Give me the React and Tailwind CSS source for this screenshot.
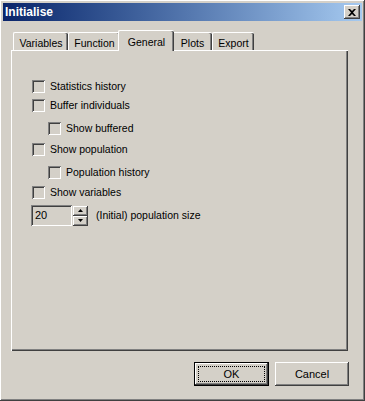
import React from 'react';

const raised =
  'bg-[#d4d0c8] shadow-[inset_-1px_-1px_#404040,inset_1px_1px_#ffffff,inset_-2px_-2px_#808080,inset_2px_2px_#d4d0c8]';
const sunken =
  'shadow-[inset_1px_1px_#808080,inset_-1px_-1px_#ffffff,inset_2px_2px_#404040,inset_-2px_-2px_#d4d0c8]';

function Checkbox({ label, indent, className = '' }) {
  return (
    <div className={`flex items-center h-[13px] ${indent ? 'pl-[36px]' : 'pl-[20px]'} ${className}`}>
      <div className={`w-[13px] h-[13px] bg-[#d4d0c8] ${sunken}`} />
      <span className="ml-[5px] leading-none">{label}</span>
    </div>
  );
}

function Tab({ label, width, selected }) {
  if (selected) {
    return (
      <div
        className="relative z-10 -mx-[2px] h-[21px] -mb-[1px] flex items-start justify-center pt-[4px] bg-[#d4d0c8] rounded-t-[2px] border-t border-l border-white shadow-[inset_-1px_0_#404040,inset_-2px_0_#808080]"
        style={{ width: width + 4 }}
      >
        {label}
      </div>
    );
  }
  return (
    <div
      className="h-[18px] mt-[2px] flex items-start justify-center pt-[3px] rounded-t-[2px] border-t border-l border-white shadow-[inset_-1px_0_#404040,inset_-2px_0_#808080]"
      style={{ width }}
    >
      {label}
    </div>
  );
}

export default function App() {
  return (
    <div
      className={`w-[365px] h-[401px] p-[2px] flex flex-col text-black text-[10.5px] ${raised}`}
      style={{ fontFamily: '"Liberation Sans", Arial, sans-serif' }}
    >
      <div className="h-[18px] mx-[1px] mt-[1px] flex items-center justify-between bg-gradient-to-r from-[#0a246a] to-[#a6caf0]">
        <span className="pl-[2px] text-white font-bold text-[12px]">Initialise</span>
        <div className={`w-[16px] h-[14px] mr-[2px] flex items-center justify-center ${raised}`}>
          <svg width="8" height="7" viewBox="0 0 8 7">
            <path d="M0 0h2l2 2 2-2h2L5 3.5 8 7H6L4 5 2 7H0l3-3.5z" fill="#000" />
          </svg>
        </div>
      </div>

      <div className="ml-[9px] mt-[9px] w-[337px] flex flex-col">
        <div className="flex items-end h-[20px] pl-[2px]">
          <Tab label="Variables" width={55} />
          <Tab label="Function" width={52} />
          <Tab label="General" width={52} selected />
          <Tab label="Plots" width={40} />
          <Tab label="Export" width={42} />
        </div>
        <div className="h-[301px] pt-[29px] border-t border-l border-white shadow-[inset_-1px_-1px_#404040,inset_-2px_-2px_#808080]">
          <Checkbox label="Statistics history" />
          <Checkbox label="Buffer individuals" className="mt-[6px]" />
          <Checkbox label="Show buffered" indent className="mt-[10px]" />
          <Checkbox label="Show population" className="mt-[8px]" />
          <Checkbox label="Population history" indent className="mt-[10px]" />
          <Checkbox label="Show variables" className="mt-[7px]" />
          <div className="flex items-center pl-[19px] mt-[6px]">
            <div className={`w-[41px] h-[21px] bg-[#d4d0c8] flex items-center pl-[4px] ${sunken}`}>
              <span className="text-[11px]">20</span>
            </div>
            <div className="flex flex-col ml-[1px]">
              <div className={`w-[15px] h-[10px] flex items-center justify-center ${raised}`}>
                <svg width="5" height="3" viewBox="0 0 5 3"><path d="M2.5 0L5 3H0z" fill="#000" /></svg>
              </div>
              <div className={`w-[15px] h-[10px] flex items-center justify-center ${raised}`}>
                <svg width="5" height="3" viewBox="0 0 5 3"><path d="M0 0h5L2.5 3z" fill="#000" /></svg>
              </div>
            </div>
            <span className="ml-[8px]">(Initial) population size</span>
          </div>
        </div>
      </div>

      <div className="flex justify-end gap-[6px] mt-[11px] mr-[14px]">
        <div className="w-[75px] h-[24px] border border-black p-[3px] bg-[#d4d0c8] shadow-[inset_-1px_-1px_#404040,inset_1px_1px_#ffffff,inset_-2px_-2px_#808080]">
          <div className="w-full h-full border border-dotted border-black flex items-center justify-center text-[11px]">OK</div>
        </div>
        <div className={`w-[74px] h-[24px] flex items-center justify-center text-[11px] ${raised}`}>Cancel</div>
      </div>
    </div>
  );
}
